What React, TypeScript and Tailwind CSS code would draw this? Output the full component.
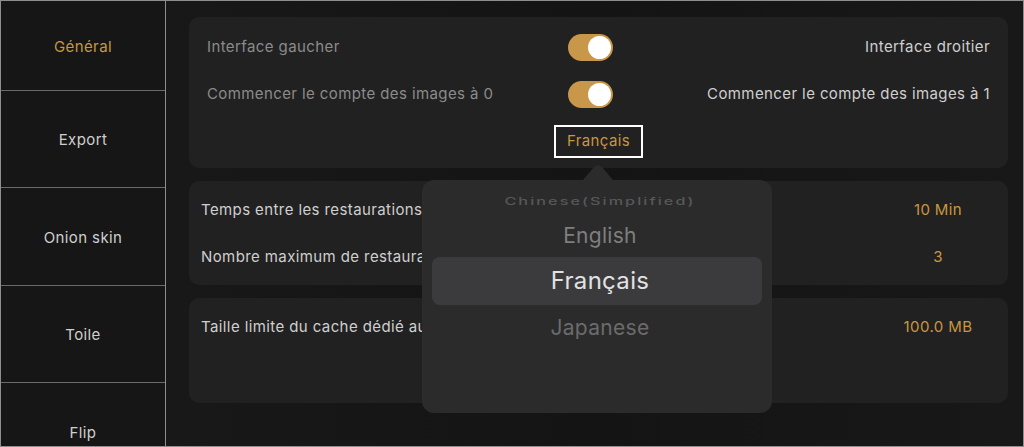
const font = { fontFamily: "Inter, 'Noto Sans', sans-serif", letterSpacing: "0.4px" };

const navItems = ["Général", "Export", "Onion skin", "Toile", "Flip"];

function Toggle() {
  return (
    <div className="relative h-[27px] w-[45px] rounded-full bg-[#c9974a]">
      <div className="absolute right-[2px] top-[2px] h-[23px] w-[23px] rounded-full bg-white" />
    </div>
  );
}

function ToggleRow({ left, right }: { left: string; right: string }) {
  return (
    <div className="flex h-[27px] items-center">
      <div className="w-[379px] pl-[18px] text-[15px] text-[#8b8b8b]">{left}</div>
      <Toggle />
      <div className="flex-1 pr-[18px] text-right text-[15px] text-[#cfcfcf]">{right}</div>
    </div>
  );
}

function ValueRow({ label, value }: { label: string; value: string }) {
  return (
    <div className="flex h-[27px] items-center">
      <div className="flex-1 truncate pl-[12px] text-[15px] text-[#cfcfcf]">{label}</div>
      <div className="mr-[20px] w-[100px] text-center text-[15px] text-[#c9973f]">{value}</div>
    </div>
  );
}

function Sidebar() {
  return (
    <div className="flex h-full w-[165px] shrink-0 flex-col border-r border-[#8e8e8e] bg-[#161616]">
      {navItems.map((item, i) => (
        <div
          key={item}
          className={`flex shrink-0 items-center justify-center border-b border-[#6a6a6a] pt-[3px] text-[15px] ${
            i === 0 ? "h-[89.5px] text-[#c9973f]" : "h-[97.5px] text-[#cfcfcf]"
          }`}
        >
          {item}
        </div>
      ))}
    </div>
  );
}

function LanguagePopover() {
  return (
    <div className="absolute left-[256px] top-[163px] w-[350px]" style={{ letterSpacing: "0.3px" }}>
      <svg width="30" height="16" viewBox="0 0 30 16" className="ml-[161px] block">
        <path d="M0 16 L11 3 Q15 -1 19 3 L30 16 Z" fill="#2b2b2c" />
      </svg>
      <div className="h-[233px] rounded-[12px] bg-[#2b2b2c] pl-[10px] pr-[10px] pt-[12px]">
        <div className="ml-[6px] flex h-[18px] scale-x-[1.08] scale-y-[0.72] items-center justify-center text-[15px] font-medium tracking-[1.9px] text-[#585858]">
          Chinese(Simplified)
        </div>
        <div className="ml-[6px] mt-[9px] flex h-[34px] items-center justify-center text-[21px] text-[#7f7f7f]">
          English
        </div>
        <div className="mt-[4px] flex h-[48px] items-center justify-center rounded-[8px] bg-[#3b3b3d] pl-[6px] text-[24px] text-[#e2e2e2]">
          Français
        </div>
        <div className="ml-[6px] mt-[6px] flex h-[34px] items-center justify-center text-[21px] text-[#6b6b6b]">
          Japanese
        </div>
      </div>
    </div>
  );
}

export default function App() {
  return (
    <div
      className="flex h-[447px] w-[1024px] overflow-hidden border border-[#8e8e8e] bg-[#171717]"
      style={font}
    >
      <Sidebar />
      <main className="relative flex flex-1 flex-col gap-[13px] bg-gradient-to-r from-[#181818] via-[#141414] to-[#181818] pl-[23px] pr-[15px] pt-[16px]">
        <section className="flex h-[151px] flex-col rounded-[10px] bg-[#212121] pt-[17px]">
          <div className="flex flex-col gap-[20px]">
            <ToggleRow left="Interface gaucher" right="Interface droitier" />
            <ToggleRow
              left="Commencer le compte des images à 0"
              right="Commencer le compte des images à 1"
            />
          </div>
          <div className="mt-[17px] flex justify-center">
            <div className="flex h-[33px] w-[89px] items-center justify-center border-2 border-white text-[15px] text-[#c9973f]">
              Français
            </div>
          </div>
        </section>
        <section className="flex h-[104px] flex-col gap-[20px] rounded-[10px] bg-[#212121] pt-[16px]">
          <ValueRow label="Temps entre les restaurations automatiques" value="10 Min" />
          <ValueRow label="Nombre maximum de restaurations automatiques" value="3" />
        </section>
        <section className="flex h-[105px] flex-col rounded-[10px] bg-[#212121] pt-[16px]">
          <ValueRow label="Taille limite du cache dédié aux restaurations" value="100.0 MB" />
        </section>
        <LanguagePopover />
      </main>
    </div>
  );
}
